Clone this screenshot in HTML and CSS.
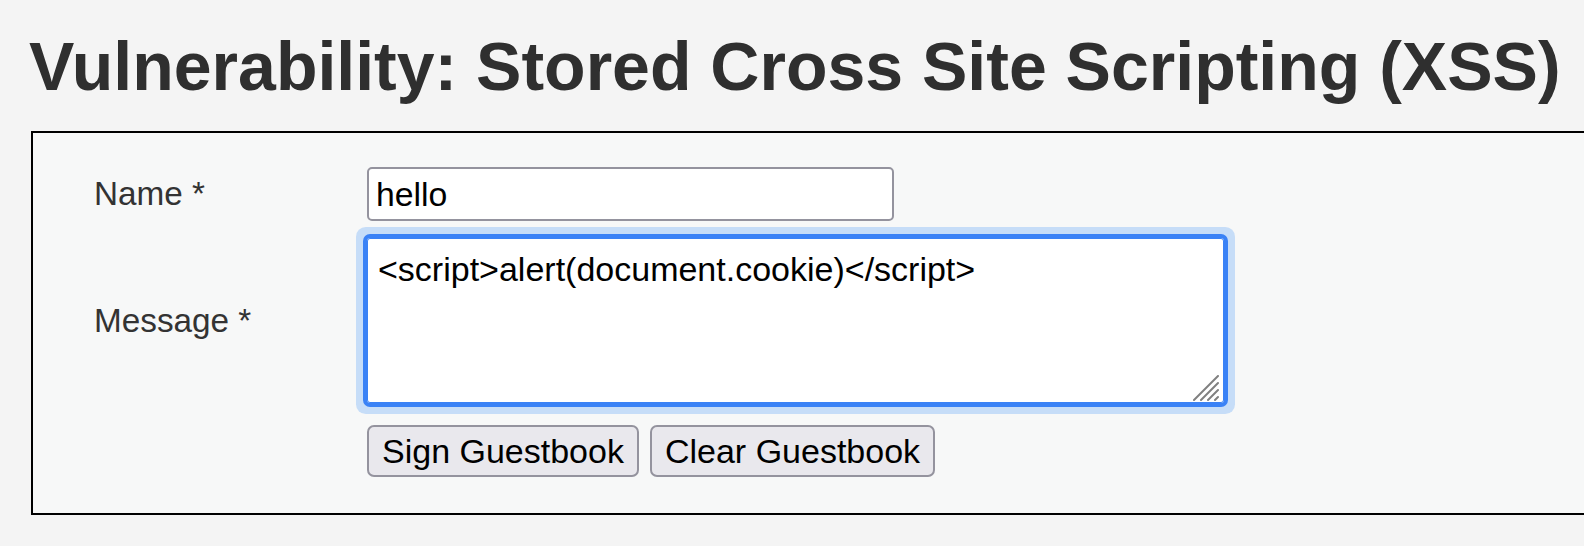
FILE: index.html
```html
<!DOCTYPE html>
<html>
<head>
<meta charset="utf-8">
<link rel="stylesheet" href="styles.css">
</head>
<body>
<h1 class="title">Vulnerability: Stored Cross Site Scripting (XSS)</h1>
<div class="vulnerable-code">
  <form class="guestbook">
    <label class="lbl" for="txtName">Name *</label>
    <div class="cell"><input id="txtName" class="name-input" type="text" value="hello"></div>
    <label class="lbl lbl-msg" for="mtxMessage">Message *</label>
    <div class="cell msg-cell">
      <textarea id="mtxMessage" class="msg-input">&lt;script&gt;alert(document.cookie)&lt;/script&gt;</textarea>
      <svg class="grip" width="26" height="26" viewBox="0 0 26 26" aria-hidden="true">
        <path d="M1 25 L25 1 M8 25 L25 8 M15 25 L25 15 M22 25 L25 22" stroke="#808080" stroke-width="2" stroke-linecap="round" fill="none"/>
      </svg>
    </div>
    <div class="blank"></div>
    <div class="cell buttons">
      <button type="button" class="btn">Sign Guestbook</button>
      <button type="button" class="btn">Clear Guestbook</button>
    </div>
  </form>
</div>
</body>
</html>
```

FILE: styles.css
```css
html, body {
  margin: 0;
  padding: 0;
  background: #f4f4f4;
  overflow: hidden;
}
body {
  font-family: "Liberation Sans", Arial, Helvetica, sans-serif;
  width: 1584px;
  height: 546px;
}
.title {
  margin: 0;
  padding: 28px 0 0 29px;
  font-size: 68px;
  font-weight: bold;
  line-height: 77px;
  color: #2f2f2f;
  white-space: nowrap;
}
.vulnerable-code {
  margin: 26px 0 0 31px;
  width: 1640px;
  border: 2px solid #000;
  background: #f7f8f8;
}
.guestbook {
  display: grid;
  grid-template-columns: 273px auto;
  align-items: center;
  justify-content: start;
  padding: 34px 0 36px 61px;
}
.lbl {
  font-size: 33.3px;
  line-height: 38px;
  color: #333;
}
.lbl-msg {
  margin-top: 17px;
}
.cell {
  display: flex;
}
.name-input {
  box-sizing: border-box;
  width: 527px;
  height: 54px;
  margin: 0;
  padding: 6px 7px;
  border: 2px solid #94939e;
  border-radius: 5px;
  background: #fff;
  font-family: "Liberation Sans", Arial, sans-serif;
  font-size: 33.8px;
  line-height: 38px;
  color: #000;
}
.msg-cell {
  position: relative;
  margin-top: 17px;
}
.msg-input {
  box-sizing: border-box;
  width: 857px;
  height: 165px;
  margin: 0;
  padding: 11px 10px;
  border: 1px solid #3a82f6;
  border-radius: 3px;
  outline: 4px solid #3a82f6;
  outline-offset: 0;
  box-shadow: 0 0 0 11px #c6ddf8;
  background: #fff;
  font-family: "Liberation Sans", Arial, sans-serif;
  font-size: 34px;
  line-height: 38px;
  color: #000;
  resize: none;
}
.grip {
  position: absolute;
  right: 5px;
  bottom: 2px;
}
.buttons {
  margin-top: 22px;
  gap: 11px;
}
.btn {
  box-sizing: border-box;
  height: 52px;
  margin: 0;
  padding: 0 13px;
  border: 2px solid #94939e;
  border-radius: 7px;
  background: #e9e8ed;
  font-family: "Liberation Sans", Arial, sans-serif;
  font-size: 34px;
  color: #000;
}
```
